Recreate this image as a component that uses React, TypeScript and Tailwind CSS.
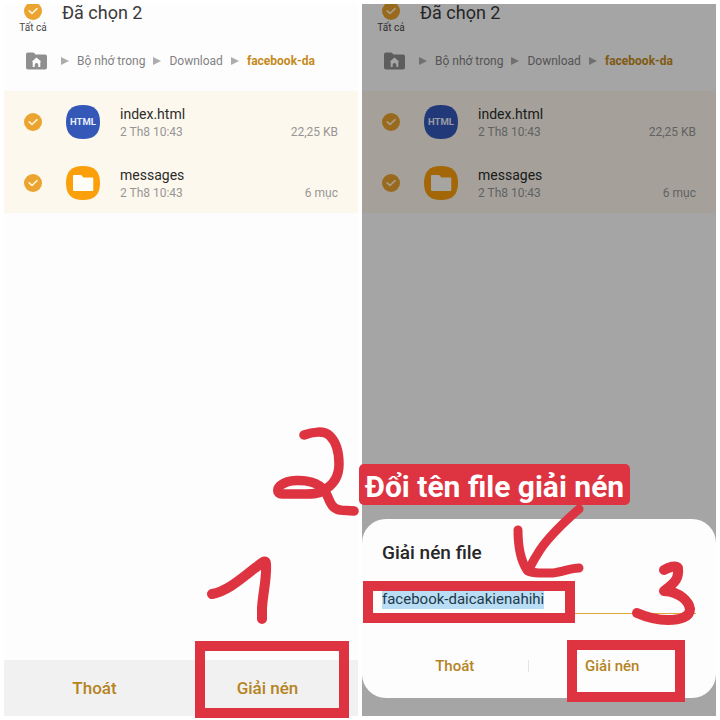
import { Fragment } from "react";

type FileItem = {
    name: string;
    date: string;
    detail: string;
    kind: "html" | "folder";
};

const files: FileItem[] = [
    { name: "index.html", date: "2 Th8 10:43", detail: "22,25 KB", kind: "html" },
    { name: "messages", date: "2 Th8 10:43", detail: "6 mục", kind: "folder" },
];

const crumbs = ["Bộ nhớ trong", "Download", "facebook-da"];

function RoundCheck({ id, label }: { id: string; label: string }) {
    return (
        <span className="relative block size-[18px]">
            <input
                id={id}
                type="checkbox"
                defaultChecked
                aria-label={label}
                className="block size-[18px] appearance-none rounded-full bg-[#eba42f]"
            />
            <svg
                viewBox="0 0 18 18"
                className="pointer-events-none absolute inset-0"
                fill="none"
                stroke="#fff3d6"
                strokeWidth="1.6"
                strokeLinecap="round"
                strokeLinejoin="round"
            >
                <path d="M5.2 8.8 8 11.5l5-4.8" />
            </svg>
        </span>
    );
}

function FileIcon({ kind }: { kind: FileItem["kind"] }) {
    return (
        <svg viewBox="0 0 34 34" className="size-[34px]">
            <path
                d="M17 0C28.5 0 34 5.5 34 17S28.5 34 17 34 0 28.5 0 17 5.5 0 17 0Z"
                fill={kind === "html" ? "#3358b8" : "#fb9f0b"}
            />
            {kind === "html" ? (
                <text
                    x="17"
                    y="20"
                    textAnchor="middle"
                    fontSize="9.5"
                    fontWeight="700"
                    fill="#e9eefb"
                >
                    HTML
                </text>
            ) : (
                <path
                    d="M8 9h6.500c.6 0 1 .2 1.300.6l1.400 1.900h8.800c.8 0 1.300.5 1.300 1.300v10.900c0 .8-.5 1.300-1.300 1.300H8.500c-.9 0-1.500-.5-1.500-1.300V10c0-.6.400-1 1-1Z"
                    fill="#fffdf8"
                />
            )}
        </svg>
    );
}

function HomeFolder() {
    return (
        <svg viewBox="0 0 21 18" className="h-[18px] w-[21px]">
            <path
                d="M2 .5h5c.6 0 1 .2 1.400.7L9.500 2.500H19c1.200 0 2 .8 2 2v11c0 1.200-.8 2-2 2H2c-1.200 0-2-.8-2-2v-13c0-1.200.8-2 2-2Z"
                fill="#8f8f8f"
            />
            <path
                d="m10.500 5.500 4.800 4.200h-1V15h-2v-2.200a1.800 1.800 0 0 0-3.600 0V15h-2V9.700h-1Z"
                fill="#fdfdfd"
            />
        </svg>
    );
}

function FileScreen({ id }: { id: string }) {
    return (
        <div className="flex flex-1 flex-col bg-[#fdfdfd]">
            <header className="h-[87px]">
                <div className="flex h-9 items-start pl-3">
                    <label
                        htmlFor={`${id}-all`}
                        className="flex w-[34px] flex-col items-center text-[10px] leading-4 whitespace-nowrap text-[#4a4a4a]"
                    >
                        {/* list is scrolled a little, so the top of the circle is clipped */}
                        <span className="flex h-4 items-end overflow-hidden">
                            <RoundCheck id={`${id}-all`} label="Tất cả" />
                        </span>
                        Tất cả
                    </label>
                    <h1 className="pl-3 text-[18px] leading-[18px] text-[#3a3a3a]">Đã chọn 2</h1>
                </div>
                <nav className="mt-2.5 flex h-[22px] items-center pl-[22px] text-[12px] leading-4 text-[#828282]">
                    <a href="#home" aria-label="Home" className="mr-1.5">
                        <HomeFolder />
                    </a>
                    {crumbs.map((crumb, i) => (
                        <Fragment key={crumb}>
                            <svg viewBox="0 0 8 8" className="mx-2 size-2" fill="#adadad">
                                <path d="M0 0l8 4-8 4Z" />
                            </svg>
                            <a
                                href={`#${crumb}`}
                                className={i === crumbs.length - 1 ? "font-bold text-[#c58a1c]" : ""}
                            >
                                {crumb}
                            </a>
                        </Fragment>
                    ))}
                </nav>
            </header>
            <ul className="bg-[#fdf8ed]">
                {files.map((file) => (
                    <li key={file.name} className="flex h-[61px] items-center px-5">
                        <RoundCheck id={`${id}-${file.name}`} label={file.name} />
                        <span className="ml-6">
                            <FileIcon kind={file.kind} />
                        </span>
                        <div className="ml-5 flex flex-1 items-end justify-between text-[12px] leading-4 text-[#969696]">
                            <div>
                                <p className="text-[14px] leading-5 text-[#2c2c2c]">{file.name}</p>
                                <p>{file.date}</p>
                            </div>
                            <p>{file.detail}</p>
                        </div>
                    </li>
                ))}
            </ul>
        </div>
    );
}

function RenameDialog() {
    return (
        <div
            role="dialog"
            aria-labelledby="dialog-title"
            className="absolute inset-x-0 bottom-[18px] h-[179px] rounded-[24px] bg-[#fdfdfd] px-5 pt-[22px]"
        >
            <h2 id="dialog-title" className="text-[19px] leading-6 font-medium text-[#262626]">
                Giải nén file
            </h2>
            <input
                aria-label="Giải nén file"
                defaultValue="facebook-daicakienahihi"
                className="mt-6 block field-sizing-content h-5 bg-[#b9ddf4] text-[15px] leading-5 text-[#21394a] outline-none"
            />
            <div className="mt-1 h-px bg-[#dfa83c]" />
            <div className="absolute top-[62px] left-px h-[42px] w-[212px] border-10 border-[#de3341]" />
            <div className="mt-[46px] grid grid-cols-[7fr_8fr] items-center text-[15px] leading-5 font-medium text-[#b5841f]">
                <button className="border-r border-[#e4e4e4] leading-3">Thoát</button>
                <button className="relative leading-3">
                    Giải nén
                    <span className="absolute -top-5 left-[38px] h-[62px] w-[118px] border-10 border-[#de3341]" />
                </button>
            </div>
            <svg
                viewBox="510 500 80 84"
                className="pointer-events-none absolute right-[126px] bottom-[114px] h-[84px] w-20"
                fill="none"
                stroke="#de3341"
                strokeWidth="9"
                strokeLinecap="round"
                strokeLinejoin="round"
            >
                <path d="M579 509C562 524 546 541 540 550C534 559 531 565 528 571" />
                <path d="M518 530C518 545 521 561 527 570C531 574 543 573 553 573C563 572 570 568 579 568" />
            </svg>
            <svg
                viewBox="628 556 76 76"
                className="pointer-events-none absolute right-3 bottom-[66px] size-[76px]"
                fill="none"
                stroke="#de3341"
                strokeWidth="10"
                strokeLinecap="round"
                strokeLinejoin="round"
            >
                <path d="M664 570C669 567 676 565 678 568C679 578 676 582 664 591C681 592 689 602 690 609C690 617 680 620 668 620C657 620 646 617 637 613" />
            </svg>
        </div>
    );
}

export default function App() {
    return (
        <main className="grid min-h-screen grid-cols-2 gap-1 overflow-hidden bg-white p-1 font-['Roboto',sans-serif]">
            <section className="relative flex flex-col">
                <FileScreen id="before" />
                <footer className="grid h-14 grid-cols-2 bg-[#f2f1f1] px-1 text-[17px] leading-5 font-medium text-[#b5841f]">
                    <button>Thoát</button>
                    <button className="relative">
                        Giải nén
                        <span className="absolute -top-[19px] right-[5px] h-[77px] w-[154px] border-10 border-[#de3341]" />
                    </button>
                </footer>
                <svg
                    viewBox="200 552 80 80"
                    className="pointer-events-none absolute right-[78px] bottom-[84px] size-20"
                    fill="none"
                    stroke="#de3341"
                    strokeWidth="10"
                    strokeLinecap="round"
                    strokeLinejoin="round"
                >
                    <path d="M212 594C228 591 243 577 255 568C261 564 266 558 266 564C267 578 263 592 262 608L262 619" />
                </svg>
                <svg
                    viewBox="268 422 96 96"
                    className="pointer-events-none absolute -right-1.5 bottom-[198px] size-24"
                    fill="none"
                    stroke="#de3341"
                    strokeWidth="9.5"
                    strokeLinecap="round"
                    strokeLinejoin="round"
                >
                    <path d="M304 435C312 432 324 430 330 436C337 443 339 453 339 464C339 475 335 484 324 490C319 494 312 494 306 494H282C276 494 277 488 281 485C289 479 304 480 311 482C318 484 322 487 325 491C330 500 330 508 340 510C344 511 349 510 354 511" />
                </svg>
            </section>
            <section className="relative flex flex-col">
                <FileScreen id="after" />
                <div className="absolute inset-0 bg-black/35" />
                <RenameDialog />
                <p className="absolute bottom-[211px] -left-[3px] rounded-[5px] bg-[#de3341] px-1.5 pt-1 text-[30px] leading-[37px] font-bold whitespace-nowrap text-white">
                    Đổi tên file giải nén
                </p>
            </section>
        </main>
    );
}
